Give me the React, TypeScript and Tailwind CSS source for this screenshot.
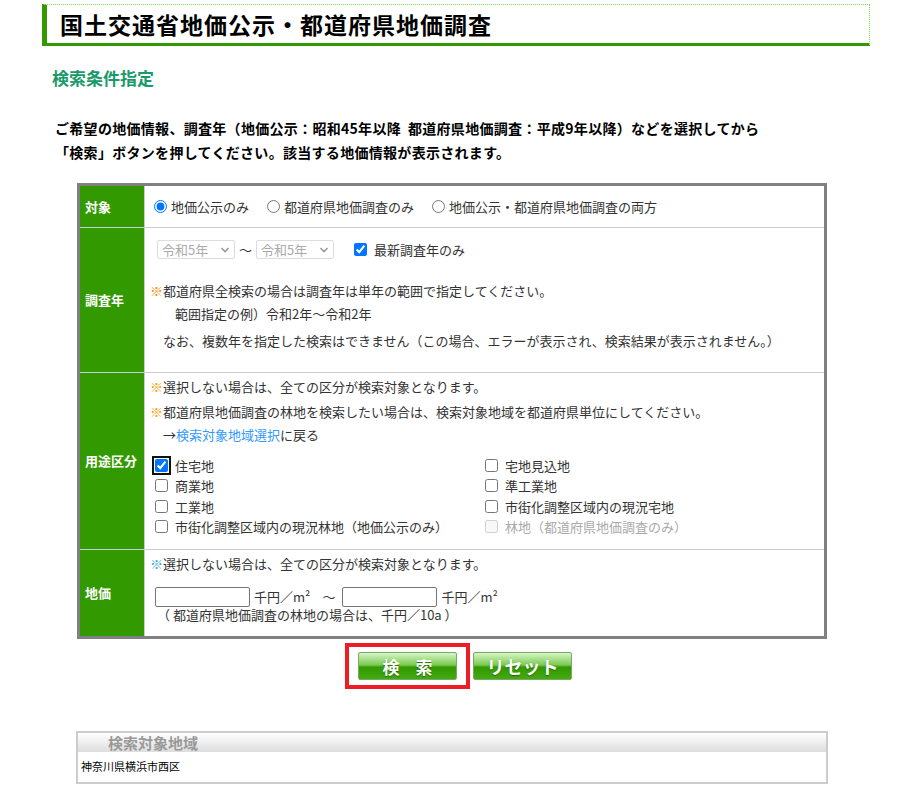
import React from 'react';

const font = "font-['Noto_Sans_CJK_JP','Noto_Sans',sans-serif]";

function Chevron() {
  return (
    <svg className="pointer-events-none absolute right-[5px] top-[6px] h-[8px] w-[10px] text-[#999]" viewBox="0 0 10 8" fill="none" stroke="currentColor" strokeWidth={1.6}>
      <path d="M1.5 2l3.5 3.5L8.5 2" />
    </svg>
  );
}

function YearSelect() {
  return (
    <div className="relative h-[19px] w-[78px]">
      <select
        disabled
        className="h-full w-full appearance-none rounded-[2px] border border-[#ddd] bg-white pl-[4px] text-[13px] leading-[17px] text-[#aaa]"
        defaultValue="r5"
      >
        <option value="r5">令和5年</option>
      </select>
      <Chevron />
    </div>
  );
}

function Check({ label, checked, disabled, focused }: { label: string; checked?: boolean; disabled?: boolean; focused?: boolean }) {
  return (
    <label className={`flex h-[20.5px] items-center gap-[7px] ${disabled ? 'text-[#aaa]' : 'text-[#333]'}`}>
      <input
        type="checkbox"
        defaultChecked={checked}
        disabled={disabled}
        className={`m-0 h-[13px] w-[13px] ${focused ? 'rounded-[2px] outline outline-2 outline-offset-1 outline-[#111]' : ''}`}
      />
      <span>{label}</span>
    </label>
  );
}

function Row({ label, h, children }: { label: string; h: string; children: React.ReactNode }) {
  return (
    <div className={`flex ${h} border-b border-[#ccc] last:border-b-0`}>
      <div className="flex w-[65px] shrink-0 items-center border-r border-[#ccc] bg-[#339900] pl-[5px] text-[13px] font-bold text-white">
        {label}
      </div>
      <div className="flex-1 bg-white pl-[5px] text-[13px] text-[#333]">{children}</div>
    </div>
  );
}

export default function App() {
  return (
    <div className={`${font} min-h-[800px] bg-white pt-[4px] text-black`}>
      {/* Title */}
      <div className="ml-[42px] flex h-[42px] w-[828px] items-center border-t border-r border-dotted border-[#88dd44] border-b-[3px] border-b-[#339900] border-l-[5px] border-l-[#339900] pl-[13px] [border-bottom-style:solid] [border-left-style:solid]">
        <h1 className="text-[23px] font-bold leading-none tracking-[1px]">国土交通省地価公示・都道府県地価調査</h1>
      </div>

      <h2 className="ml-[52px] mt-[20px] text-[17px] font-bold leading-[24px] text-[#1a9a6a]">検索条件指定</h2>

      <p className="ml-[55px] mt-[26px] text-[14px] font-bold leading-[24px] tracking-[0.3px]">
        ご希望の地価情報、調査年（地価公示：昭和45年以降&nbsp;&nbsp;都道府県地価調査：平成9年以降）などを選択してから
        <br />
        「検索」ボタンを押してください。該当する地価情報が表示されます。
      </p>

      {/* Search form */}
      <div className="ml-[77px] mt-[19px] w-[750px] border-[3px] border-[#808080]">
        <Row label="対象" h="h-[42px]">
          <div className="flex h-full items-center gap-[18px] pl-[4px]">
            <label className="flex items-center gap-[4px]">
              <input type="radio" name="t" defaultChecked className="m-0 h-[13px] w-[13px]" />
              地価公示のみ
            </label>
            <label className="flex items-center gap-[4px]">
              <input type="radio" name="t" className="m-0 h-[13px] w-[13px]" />
              都道府県地価調査のみ
            </label>
            <label className="flex items-center gap-[4px]">
              <input type="radio" name="t" className="m-0 h-[13px] w-[13px]" />
              地価公示・都道府県地価調査の両方
            </label>
          </div>
        </Row>

        <Row label="調査年" h="h-[145px]">
          <div className="flex items-center pl-[7px] pt-[12px]">
            <YearSelect />
            <span className="mx-[4px]">～</span>
            <YearSelect />
            <label className="ml-[20px] flex items-center gap-[7px]">
              <input type="checkbox" defaultChecked className="m-0 h-[13px] w-[13px]" />
              最新調査年のみ
            </label>
          </div>
          <div className="mt-[21px] leading-[20px]">
            <p>
              <span className="text-[#ff8800]">※</span>都道府県全検索の場合は調査年は単年の範囲で指定してください。
            </p>
            <p className="ml-[25px] mt-[3px]">範囲指定の例）令和2年～令和2年</p>
            <p className="ml-[13px] mt-[7px]">なお、複数年を指定した検索はできません（この場合、エラーが表示され、検索結果が表示されません。）</p>
          </div>
        </Row>

        <Row label="用途区分" h="h-[177px]">
          <div className="pt-[4px] leading-[20px]">
            <p>
              <span className="text-[#ff9900]">※</span>選択しない場合は、全ての区分が検索対象となります。
            </p>
            <p className="mt-[5px]">
              <span className="text-[#ff9900]">※</span>都道府県地価調査の林地を検索したい場合は、検索対象地域を都道府県単位にしてください。
            </p>
            <p className="ml-[13px] mt-[3px]">
              →<span className="text-[#3399ff]">検索対象地域選択</span>に戻る
            </p>
          </div>
          <div className="mt-[10px] grid grid-cols-[330px_1fr] pl-[5px]">
            <Check label="住宅地" checked focused />
            <Check label="宅地見込地" />
            <Check label="商業地" />
            <Check label="準工業地" />
            <Check label="工業地" />
            <Check label="市街化調整区域内の現況宅地" />
            <Check label="市街化調整区域内の現況林地（地価公示のみ）" />
            <Check label="林地（都道府県地価調査のみ）" disabled />
          </div>
        </Row>

        <Row label="地価" h="h-[86px]">
          <p className="pt-[4px] leading-[20px]">
            <span className="text-[#33aadd]">※</span>選択しない場合は、全ての区分が検索対象となります。
          </p>
          <div className="mt-[13px] flex items-center pl-[5px]">
            <input type="text" className="h-[20px] w-[95px] rounded-[2px] border border-[#767676]" />
            <span className="ml-[4px]">千円／m²</span>
            <span className="ml-[12px] mr-[7px]">～</span>
            <input type="text" className="h-[20px] w-[95px] rounded-[2px] border border-[#767676]" />
            <span className="ml-[4px]">千円／m²</span>
          </div>
          <p className="ml-[7px] leading-[16px]">（ 都道府県地価調査の林地の場合は、千円／10a ）</p>
        </Row>
      </div>

      {/* Buttons */}
      <div className="ml-[345px] mt-[4px] flex items-center gap-[3px]">
        <div className="border-[4px] border-[#ee1c25] px-[9px] py-[5px]">
          <button className="h-[28px] w-[99px] rounded-[2px] border border-[#77aa66] bg-[linear-gradient(#d8f5c8_0%,#7ccc55_45%,#339900_55%,#44aa11_100%)] pl-[16px] text-[17px] font-bold leading-none tracking-[16px] text-white [text-shadow:0_1px_1px_#226600]">
            検索
          </button>
        </div>
        <button className="h-[28px] w-[99px] rounded-[2px] border border-[#77aa66] bg-[linear-gradient(#d8f5c8_0%,#7ccc55_45%,#339900_55%,#44aa11_100%)] text-[18px] font-bold leading-none text-white [text-shadow:0_1px_1px_#226600]">
          リセット
        </button>
      </div>

      {/* Search area */}
      <div className="ml-[76px] mt-[42px] w-[752px] border-2 border-[#ccc]">
        <div className="h-[19px] bg-[linear-gradient(#ffffff,#dddddd)] pl-[30px] text-[15px] font-bold leading-[19px] text-[#999]">
          検索対象地域
        </div>
        <div className="h-[30px] pl-[3px] pt-[6px] text-[11px] leading-[16px]">神奈川県横浜市西区</div>
      </div>
    </div>
  );
}
